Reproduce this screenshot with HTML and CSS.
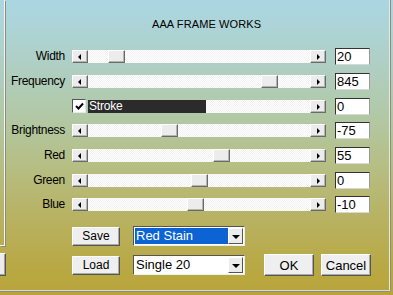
FILE: index.html
```html
<!DOCTYPE html>
<html>
<head>
<meta charset="utf-8">
<link rel="stylesheet" href="styles.css">
</head>
<body>
<div class="window">
  <div class="frame">
    <div class="leftedge">
      <div class="group"></div>
      <div class="btnfrag"></div>
    </div>
    <div class="dialog">
      <div class="title">AAA FRAME WORKS</div>
      <div class="rows">
        <div class="label">Width</div>
        <div class="scroll"><span class="arrow left"></span><div class="track"><span class="thumb" style="left:20px"></span></div><span class="arrow right"></span></div>
        <div class="box">20</div>

        <div class="label">Frequency</div>
        <div class="scroll"><span class="arrow left"></span><div class="track"><span class="thumb" style="left:173px"></span></div><span class="arrow right"></span></div>
        <div class="box">845</div>

        <div class="label"></div>
        <div class="scroll stroke"><span class="check"><svg width="9" height="9" viewBox="0 0 9 9"><path d="M1 4 L3.5 6.5 L8 1.5" fill="none" stroke="#000" stroke-width="1.9"/></svg></span><div class="track"><span class="strokebar">Stroke</span></div><span class="arrow right"></span></div>
        <div class="box">0</div>

        <div class="label">Brightness</div>
        <div class="scroll"><span class="arrow left"></span><div class="track"><span class="thumb" style="left:73px"></span></div><span class="arrow right"></span></div>
        <div class="box">-75</div>

        <div class="label">Red</div>
        <div class="scroll"><span class="arrow left"></span><div class="track"><span class="thumb" style="left:125px"></span></div><span class="arrow right"></span></div>
        <div class="box">55</div>

        <div class="label">Green</div>
        <div class="scroll"><span class="arrow left"></span><div class="track"><span class="thumb" style="left:103px"></span></div><span class="arrow right"></span></div>
        <div class="box">0</div>

        <div class="label">Blue</div>
        <div class="scroll"><span class="arrow left"></span><div class="track"><span class="thumb" style="left:99px"></span></div><span class="arrow right"></span></div>
        <div class="box">-10</div>
      </div>
      <div class="actions first">
        <button class="btn">Save</button>
        <div class="combo"><span class="value selected">Red Stain</span><span class="drop"></span></div>
      </div>
      <div class="actions second">
        <button class="btn">Load</button>
        <div class="combo"><span class="value">Single 20</span><span class="drop"></span></div>
        <button class="btn big ok">OK</button>
        <button class="btn big">Cancel</button>
      </div>
    </div>
  </div>
</div>
</body>
</html>
```

FILE: styles.css
```css
* { box-sizing: border-box; }
html, body { margin: 0; padding: 0; }
body {
  width: 393px;
  height: 295px;
  overflow: hidden;
  font-family: "Liberation Sans", Arial, sans-serif;
  font-size: 12px;
  color: #000;
}
.window {
  width: 393px;
  height: 295px;
  background: linear-gradient(180deg, #abd7e3 0%, #afcfc4 22%, #b2c8a4 40%, #b6bd80 58%, #b8b160 75%, #b9a842 92%, #b8a43a 100%);
  padding: 0 3px 4px 0;
}
.frame {
  height: 291px;
  display: flex;
  border-right: 1px solid #e8e8e0;
  border-bottom: 1px solid #d8d8d0;
  box-shadow: 1px 0 0 #8c8c80, 0 1px 0 #8c8c80;
}
.leftedge {
  width: 7px;
  display: flex;
  flex-direction: column;
}
.group {
  width: 5px;
  height: 246px;
  border-right: 1px solid #f4f4f4;
  border-bottom: 1px solid #f4f4f4;
  box-shadow: 1px 1px 0 #8a8a80;
}
.btnfrag {
  width: 6px;
  height: 23px;
  margin-top: 7px;
  background: #ececec;
  border-top: 1px solid #fff;
  border-right: 1px solid #555;
  border-bottom: 1px solid #555;
  box-shadow: inset -1px -1px 0 #a0a0a0;
}
.dialog {
  flex: 1;
  display: flex;
  flex-direction: column;
}
.title {
  margin: 18px 0 0 145px;
  font-size: 11px;
  line-height: 13px;
  letter-spacing: 0.1px;
}
.rows {
  margin-top: 17px;
  display: grid;
  grid-template-columns: 58px 254px 35px;
  grid-template-rows: 25px 25px 24px 25px 25px 24px 17px;
  column-gap: 7px;
  align-items: start;
}
.rows .box { margin-left: 2px; }
.label {
  text-align: right;
  font-size: 12px;
  line-height: 17px;
  letter-spacing: -0.3px;
}
.scroll {
  margin-top: 2px;
  height: 13px;
  display: flex;
}
.track {
  flex: 1;
  position: relative;
  background: repeating-conic-gradient(#ffffff 0 25%, #f1f1f1 0 50%) 0 0 / 2px 2px;
}
.arrow, .thumb {
  width: 16px;
  height: 13px;
  background: #ececec;
  border-top: 1px solid #fff;
  border-left: 1px solid #fff;
  border-right: 1px solid #6a6a6a;
  border-bottom: 1px solid #6a6a6a;
  box-shadow: inset -1px -1px 0 #b4b4b4;
  display: flex;
  align-items: center;
  justify-content: center;
}
.thumb {
  position: absolute;
  top: 0;
  width: 17px;
}
.arrow::before {
  content: "";
  width: 0;
  height: 0;
  border-top: 3px solid transparent;
  border-bottom: 3px solid transparent;
}
.arrow.left::before { border-right: 3px solid #000; margin-left: -1px; }
.arrow.right::before { border-left: 3px solid #000; margin-left: 1px; }
.check {
  width: 14px;
  height: 14px;
  margin: -1px 2px 0 0;
  background: #fff;
  border-top: 1px solid #555;
  border-left: 1px solid #555;
  border-right: 1px solid #e8e8e8;
  border-bottom: 1px solid #e8e8e8;
  display: flex;
  align-items: center;
  justify-content: center;
}
.strokebar {
  display: block;
  width: 118px;
  height: 13px;
  background: #2b2b2b;
  color: #fff;
  font-size: 12px;
  line-height: 13px;
  padding-left: 1px;
  letter-spacing: -0.2px;
}
.box {
  width: 35px;
  height: 17px;
  background: #fff;
  border-top: 1px solid #333;
  border-left: 1px solid #333;
  border-right: 1px solid #9a9a9a;
  border-bottom: 1px solid #d8d8d8;
  font-size: 13px;
  line-height: 15px;
  padding-left: 1px;
}
.actions {
  display: flex;
  align-items: center;
  padding-left: 65px;
}
.actions.first { margin-top: 13px; }
.actions.second { margin-top: 8px; }
.btn {
  width: 48px;
  height: 19px;
  padding: 0;
  margin: 0;
  font-family: "Liberation Sans", Arial, sans-serif;
  font-size: 12px;
  color: #000;
  background: #efefef;
  border-top: 1px solid #fff;
  border-left: 1px solid #fff;
  border-right: 1px solid #555;
  border-bottom: 1px solid #555;
  box-shadow: inset -1px -1px 0 #aaa;
}
.combo {
  width: 112px;
  height: 20px;
  margin-left: 13px;
  background: #fff;
  border-top: 1px solid #555;
  border-left: 1px solid #555;
  border-right: 1px solid #eee;
  border-bottom: 1px solid #eee;
  display: flex;
  padding: 1px;
}
.value {
  flex: 1;
  font-size: 13px;
  line-height: 16px;
  padding-left: 1px;
}
.value.selected {
  background: #0b63d4;
  color: #fff;
}
.drop {
  width: 15px;
  background: #ececec;
  border-top: 1px solid #fff;
  border-left: 1px solid #fff;
  border-right: 1px solid #555;
  border-bottom: 1px solid #555;
  display: flex;
  align-items: center;
  justify-content: center;
}
.drop::before {
  content: "";
  border-left: 4px solid transparent;
  border-right: 4px solid transparent;
  border-top: 4px solid #000;
  margin-top: 1px;
}
.btn.big {
  width: 50px;
  height: 22px;
  font-size: 13px;
}
.btn.ok { margin-left: 19px; margin-right: 7px; }
```
